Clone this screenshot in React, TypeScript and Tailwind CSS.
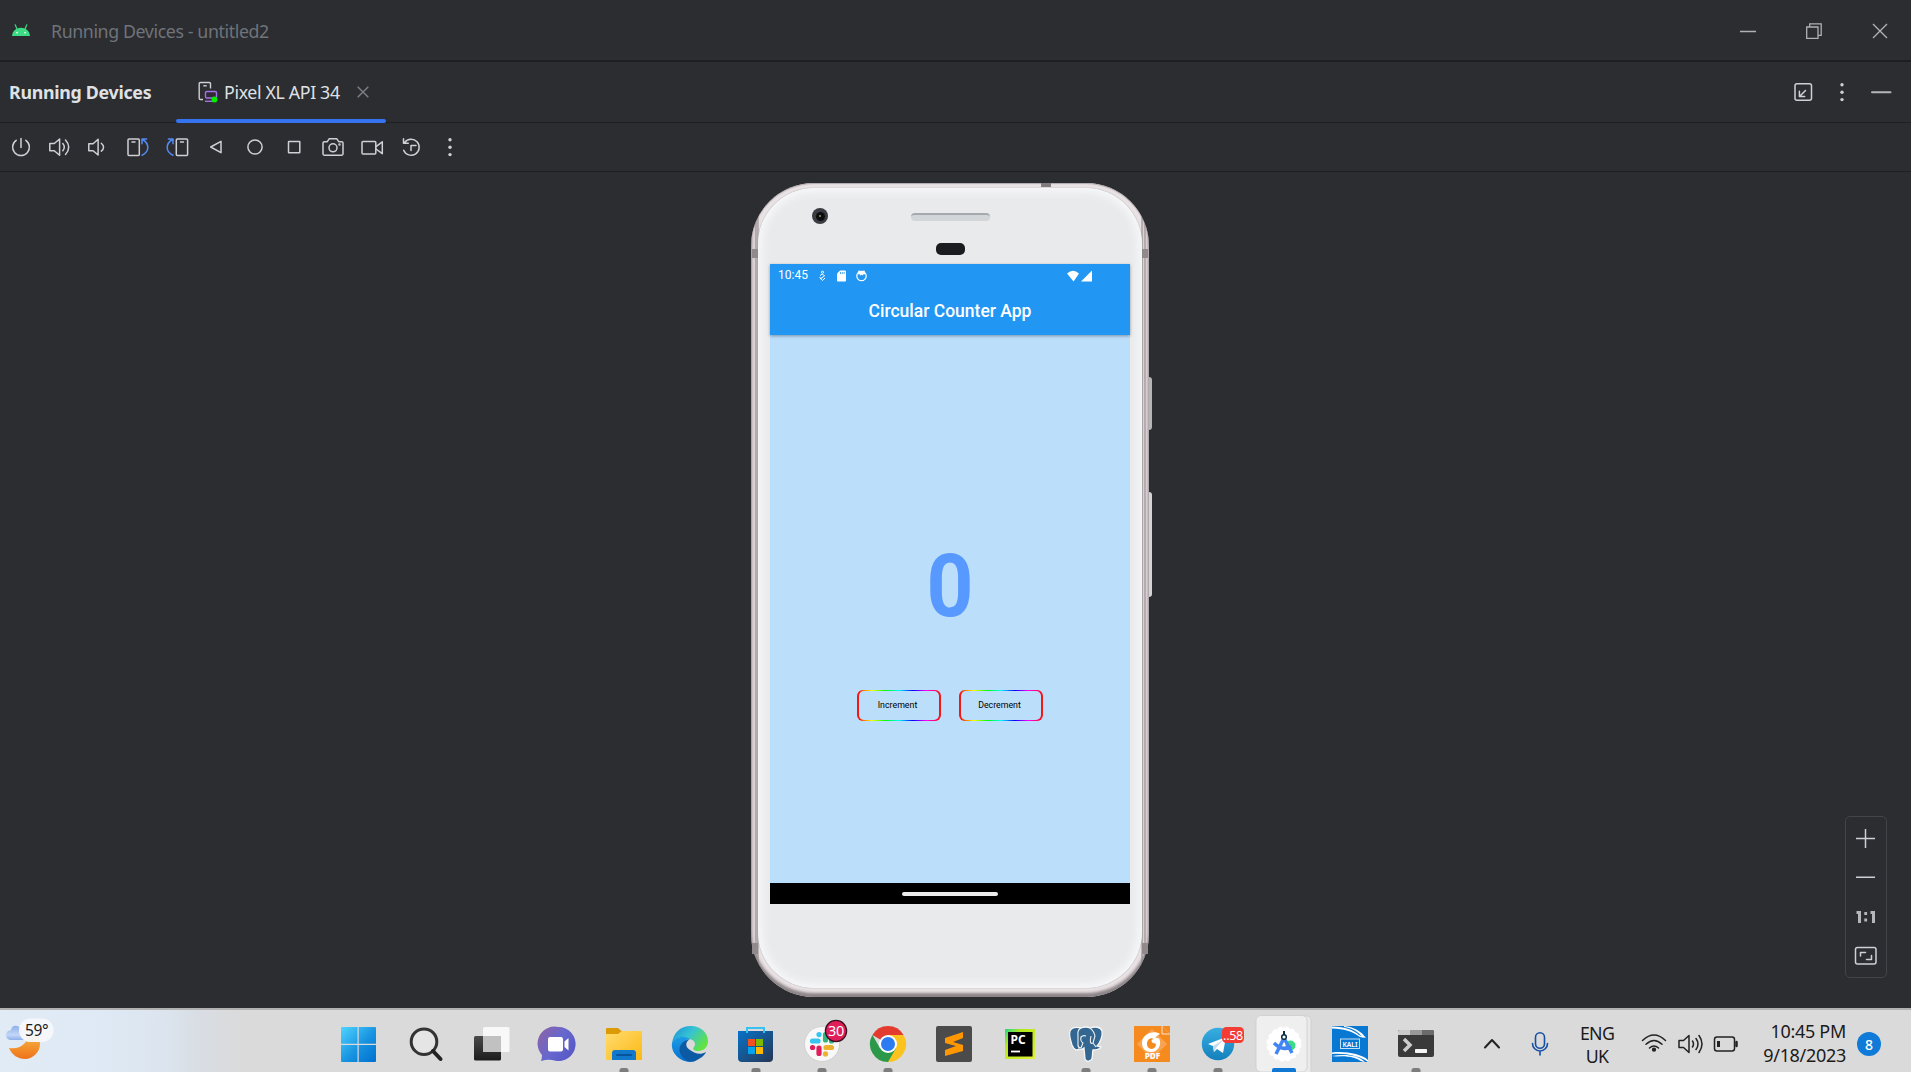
import React from "react";

const stroke = {
  fill: "none",
  stroke: "#ced0d6",
  strokeWidth: 1.5,
  strokeLinejoin: "round" as const,
  strokeLinecap: "round" as const,
};

/* 39px toolbar cell whose drawing is centred on 0,0 */
function Tool({ children }: { children: React.ReactNode }) {
  return (
    <svg className="block h-10 w-[39px] shrink-0" viewBox="-19 -20 39 40" {...stroke}>
      {children}
    </svg>
  );
}

function Dots() {
  return (
    <g fill="#ced0d6" stroke="none">
      <circle cx="0" cy="-7.3" r="1.7" />
      <circle cx="0" cy="0.2" r="1.7" />
      <circle cx="0" cy="7.6" r="1.7" />
    </g>
  );
}

function TitleBar() {
  return (
    <header className="flex h-[62px] shrink-0 items-center border-b-2 border-[#1e1f22] pl-3">
      <svg className="h-5 w-[18px]" viewBox="0 0 18 20">
        <path d="M0 16C.3 11.500 3.500 7.700 9 7.700S17.700 11.500 18 16z" fill="#3ddc84" />
        <path d="M5 9 3.200 4.800M13 9l1.800-4.200" stroke="#3ddc84" strokeWidth="1.200" strokeLinecap="round" />
        <circle cx="5" cy="12.600" r=".9" fill="#e8fff1" />
        <circle cx="13" cy="12.600" r=".9" fill="#e8fff1" />
      </svg>
      <span className="ml-[21px] whitespace-nowrap pt-[2px] text-[17.800px] tracking-[-0.400px] text-[#6f737a]">Running Devices - untitled2</span>
      <div className="ml-auto flex items-center gap-[50px] pr-[23px] pt-px">
        <svg className="h-4 w-4" viewBox="0 0 16 16"><path d="M0 8.500h16" stroke="#b0b1b3" strokeWidth="1.500" /></svg>
        <svg className="h-4 w-4" viewBox="0 0 16 16" fill="none" stroke="#b0b1b3" strokeWidth="1.300">
          <path d="M.7 4h11.300v11.300H.7zM3.700 4V.8h11.500v11.500H12" />
        </svg>
        <svg className="h-4 w-4" viewBox="0 0 16 16" stroke="#b0b1b3" strokeWidth="1.400"><path d="m1 1 14 14M15 1 1 15" /></svg>
      </div>
    </header>
  );
}

function TabBar() {
  return (
    <div className="flex h-[61px] shrink-0 border-b border-[#1e1f22] pl-[9px]">
      <div className="flex h-[60px] w-[167px] items-center whitespace-nowrap text-[17.800px] font-bold tracking-[-0.280px] text-[#dfe1e5]">Running Devices</div>
      <div className="relative flex h-[61px] w-[210px] items-center pb-px pl-[22px]">
        <svg className="h-[22px] w-5 shrink-0" viewBox="0 0 20 22" fill="none" strokeWidth="1.400">
          <path d="M12.500 7.500V2.800q0-1.300-1.300-1.300H2.500q-1.300 0-1.300 1.300v14.400q0 1.300 1.300 1.300H5" stroke="#ced0d6" />
          <path d="M5.300 4.800h3.400" stroke="#ced0d6" />
          <rect x="7.500" y="10.500" width="11" height="6.500" rx="1.200" stroke="#a571e6" fill="#2f2936" />
          <path d="M7 20.300h8" stroke="#a571e6" />
          <circle cx="16.500" cy="18.500" r="2.900" fill="#00f000" />
        </svg>
        <span className="ml-[6px] w-[117px] whitespace-nowrap text-[17.800px] tracking-[-0.360px] text-[#dfe1e5]">Pixel XL API 34</span>
        <svg className="ml-[16px] h-3 w-3" viewBox="0 0 12 12" stroke="#7d8087" strokeWidth="1.400"><path d="m.7.7 10.600 10.600M11.300.7.7 11.300" /></svg>
        <div className="absolute bottom-0 left-0 h-1 w-full rounded-full bg-[#3574f0]" />
      </div>
      <div className="ml-auto flex h-[60px] items-center pr-[10px]">
        <Tool>
          <rect x="-8" y="-8.300" width="16.500" height="16.500" rx="2" />
          <path d="m2.500-1.500-5.700 5.700M-3.600-.8v5.300h5.300" />
        </Tool>
        <Tool><Dots /></Tool>
        <Tool><path d="M-9 .3h18.500" strokeWidth="2" stroke="#b4b6ba" /></Tool>
      </div>
    </div>
  );
}

function Toolbar() {
  return (
    <div className="flex h-[49px] shrink-0 items-center border-b border-[#1e1f22] pl-[2px]">
      <Tool><path d="M0-8.500V.5M-4.800-6.700a8.400 8.400 0 1 0 9.600 0" /></Tool>
      <Tool>
        <path d="M-10.200-3.500h4.500L-.4-8V8.300l-5.300-4.600h-4.500zM2.800-3.500q3 3.500 0 7.200M5.500-7q6.500 7 0 14.500" />
      </Tool>
      <Tool><path d="M-10.200-3.300h4.300l5-4.400V8l-5-4.300h-4.300zM2.300-3.700q4.500 3.800 0 7.800" /></Tool>
      <Tool>
        <rect x="-10" y="-8" width="11.300" height="16.500" rx="1" />
        <path d="M-6-5h3" />
        <path d="M4 8.200Q9.800 5.500 9.800.5T4.500-7.500M4-3.300v-4.600h4.600" stroke="#548af7" />
      </Tool>
      <Tool>
        <rect x="-.7" y="-8" width="11.300" height="16.500" rx="1" />
        <path d="M3.500-5h3" />
        <path d="M-4 8.200Q-9.800 5.500-9.800.5t5.300-8M-4-3.300v-4.600h-4.600" stroke="#548af7" />
      </Tool>
      <Tool><path d="M-5.300 0 5-5.700V5.700z" /></Tool>
      <Tool><circle cx="0" cy="0" r="7.100" /></Tool>
      <Tool><rect x="-5.500" y="-5.500" width="11.300" height="11.300" rx=".5" /></Tool>
      <Tool>
        <path d="M-10-4q0-1.300 1.300-1.300h3l2-3H3.700l2 3h3Q10-5.300 10-4V6.800Q10 8.200 8.700 8.200H-8.700Q-10 8.200-10 6.800z" />
        <circle cx="0" cy=".8" r="4" />
        <circle cx="6.500" cy="-2.500" r=".5" />
      </Tool>
      <Tool>
        <rect x="-10" y="-5.500" width="13.800" height="12.500" rx="1" />
        <path d="M4-.3 10.300-5.200V6.700L4 2" />
      </Tool>
      <Tool>
        <path d="M-7.300 3.200a8 8 0 1 0 1-7.700M-7.500-8.300v4.600h4.800M0-1.500h5M0-1.500v5" />
      </Tool>
      <Tool><Dots /></Tool>
    </div>
  );
}

function RainbowButton({ children }: { children: React.ReactNode }) {
  return (
    <div className="h-[31px] w-[84px] rounded-[6px] border-x-2 border-[#f51616] bg-[linear-gradient(90deg,#ff2000,#ffff00_16%,#00ff00_33%,#00ffff_50%,#0000ff_67%,#ff00ff_84%,#ff0030)] py-px">
      <div className="flex h-full items-center justify-center rounded-[5px] bg-[#bbdefb] pr-[3px] font-['Roboto',sans-serif] text-[8.800px] text-black">{children}</div>
    </div>
  );
}

function Phone() {
  return (
    <div className="relative h-[814px] w-[398px] rounded-[63px] bg-[linear-gradient(90deg,#b5adb0,#ded5d8_2px,#d8cfd2_4px,#8d8588_5px,#d9d1d4_6px,#8d8588_7px,#e9e2e4_8px,#e9e2e4_390px,#8d8588_391px,#d9d1d4_392px,#d9d1d4_393px,#8d8588_394px,#ded5d8_395px,#c5bcc0)] px-[7px] pb-[9px] pt-[5px] shadow-[inset_0_-4px_3px_#8b8386,inset_0_1px_1px_#b0a8ab]">
      <div className="absolute left-full top-[194px] h-[53px] w-[3px] rounded-r-sm bg-[#b5b5b5]" />
      <div className="absolute left-full top-[309px] h-[105px] w-[3px] rounded-r-sm bg-[#d5d3d4]" />
      <div className="absolute left-[290px] top-0 h-1 w-[10px] bg-[#817b7e]" />
      <div className="absolute left-[1px] top-[66px] h-[9px] w-[6px] bg-[#918a8d]" />
      <div className="absolute right-[1px] top-[66px] h-[9px] w-[6px] bg-[#918a8d]" />
      <div className="absolute bottom-[43px] left-[1px] h-[11px] w-[6px] bg-[#918a8d]" />
      <div className="absolute bottom-[43px] right-[1px] h-[11px] w-[6px] bg-[#918a8d]" />
      <div className="relative flex h-[800px] flex-col items-center rounded-[56px] bg-[#e9eaec] shadow-[inset_0_0_9px_4px_#f7f8fa,0_0_1px_#777]">
        <div className="absolute left-[54px] top-[20px] flex h-4 w-4 items-center justify-center rounded-full bg-[#3b3d42]">
          <div className="flex h-[9px] w-[9px] items-center justify-center rounded-full bg-[#0c0d10]"><div className="h-[2px] w-[2px] bg-[#77743f]" /></div>
        </div>
        <div className="mt-[25px] h-2 w-[79px] rounded border-t-2 border-[#a5a9ae] bg-[#d3d6d9]" />
        <div className="mt-[22px] h-3 w-[29px] rounded-[5px] bg-[#1b1c20]" />
        <div className="mt-[9px] flex h-[640px] w-[360px] flex-col bg-[#bbdefb] font-['Roboto',sans-serif]">
          <div className="z-10 h-[71px] shrink-0 bg-[#2196f3] text-white shadow-[0_1px_3px_rgba(0,0,0,0.35)]">
            <div className="flex h-[23px] items-center pl-2">
              <span className="w-[31px] text-[12px] leading-[23px] tracking-[0.050px]">10:45</span>
              <svg className="ml-[9px] h-3 w-2" viewBox="0 0 8 12" fill="none" stroke="#fff" strokeWidth="1"><circle cx="4.500" cy="2.200" r="1.100" /><path d="M2 5.500 4.500 4l2 2L2 9M1.500 7l3 3.500L7 8" /></svg>
              <svg className="ml-[11px] h-3 w-[9px]" viewBox="0 0 9 12" fill="#fff"><path d="M3 .5h5q1 0 1 1v9q0 1-1 1H1q-1 0-1-1v-7z" /><path d="M3.500 2v2M5.300 2v2M7.100 2v2" stroke="#2196f3" strokeWidth=".8" /></svg>
              <svg className="ml-[10px] h-3 w-[11px]" viewBox="0 0 11 12" fill="none" stroke="#fff"><circle cx="5.500" cy="6" r="4.700" strokeWidth="1.200" /><path d="M2 2 2.500.5 5.500 1l3-.5L9 2v2.500L7.500 4 7 5.500 5.500 4.800 4 5.500 3.500 4 2 4.500z" fill="#fff" stroke="none" /></svg>
              <svg className="ml-auto mr-[37px] h-3 w-[26px]" viewBox="0 0 26 12" fill="#fff"><path d="M0 3.500Q6-1.800 12 3.500L6.500 11.500z" /><path d="M25 .5v11H14z" /></svg>
            </div>
            <h1 className="pt-[12px] text-center text-[17.500px] font-medium leading-[24px]">Circular Counter App</h1>
          </div>
          <div className="flex flex-1 flex-col items-center">
            <div className="mt-[198px] h-[106px] text-[87px] font-bold leading-[106px] tracking-[0] text-[#5899ff]"><span className="inline-block scale-x-[0.940]">0</span></div>
            <div className="mt-[51px] flex gap-[18px]">
              <RainbowButton>Increment</RainbowButton>
              <RainbowButton>Decrement</RainbowButton>
            </div>
          </div>
          <div className="flex h-[21px] items-center justify-center bg-black">
            <div className="h-1 w-24 rounded-full bg-[#ebebeb]" />
          </div>
        </div>
      </div>
    </div>
  );
}

function ZoomPanel() {
  return (
    <div className="absolute bottom-[30px] right-6 flex h-[162px] w-[42px] flex-col items-center rounded-[5px] border border-[#43454a]">
      <svg className="block h-[160px] w-10" viewBox="0 0 40 160" {...stroke}>
        <path d="M10 21.500h19M19.500 12v19M10 60.300h19" strokeLinecap="butt" />
        <path d="M10.500 95.500h3v10.500M24.500 95.500h3v10.500" stroke="#b4b6ba" strokeWidth="3" strokeLinejoin="miter" strokeLinecap="butt" />
        <path d="M18.300 96.500h2.800M18.300 103h2.800" stroke="#b4b6ba" strokeWidth="3" strokeLinecap="butt" />
        <rect x="9.500" y="130.500" width="20.500" height="16.500" rx="2" />
        <path d="M14.500 139V135.500h5M25.500 138.500v4h-5" />
      </svg>
    </div>
  );
}

/* 66px taskbar cell whose drawing is centred on 0,0 */
function App66({ children, running, active }: { children: React.ReactNode; running?: boolean; active?: boolean }) {
  return (
    <svg className="block h-[62px] w-[66px] shrink-0" viewBox="-33 -34 66 62">
      {active && (
        <>
          <path d="M0-28h22q5 0 5 5v50q0 5-5 5H0z" fill="#e9e9e9" stroke="#cbcbcb" strokeWidth=".7" />
          <rect x="-28" y="-28.500" width="51" height="56.500" rx="5" fill="#efefef" stroke="#cdcdcd" strokeWidth=".8" />
        </>
      )}
      {children}
      {active ? <rect x="-12" y="24" width="24" height="6" rx="2" fill="#0f78d4" /> : running && <rect x="-4.500" y="24" width="9" height="6" rx="2.500" fill="#7d7d7d" />}
    </svg>
  );
}

function TaskApps() {
  return (
    <div className="flex">
      <App66>
        <defs>
          <linearGradient id="win" x1="-19" y1="-17" x2="16" y2="18" gradientUnits="userSpaceOnUse"><stop stopColor="#4fd4ff" /><stop offset=".55" stopColor="#1793e0" /><stop offset="1" stopColor="#0070d0" /></linearGradient>
        </defs>
        <path d="M-19-16q0-1 1-1h15.500V-.3H-19zM-1.300-17H15q1 0 1 1V-.3H-1.300zM-19 1h16.500v17H-18q-1 0-1-1zM-1.300 1H16v16q0 1-1 1H-1.300z" fill="url(#win)" />
      </App66>
      <App66>
        <circle cx="-2" cy="-2.300" r="12.800" fill="#e5e5e5" stroke="#333" strokeWidth="3" />
        <path d="m7 7 7.500 8" stroke="#222" strokeWidth="4" strokeLinecap="round" />
      </App66>
      <App66>
        <defs><linearGradient id="tv" x1="0" y1="0" x2="0" y2="1"><stop stopColor="#4a4a4a" /><stop offset="1" stopColor="#1c1c1c" /></linearGradient></defs>
        <rect x="-18" y="-8" width="27" height="24.500" rx="1.500" fill="url(#tv)" />
        <rect x="-9" y="-17" width="26.500" height="25" rx="1.500" fill="#f8f8f8" />
        <path d="M-9-8H9V8H-8q-1 0-1-1z" fill="#c1c1c1" />
      </App66>
      <App66>
        <defs><linearGradient id="chat" x1="0" y1=".2" x2="1" y2=".8"><stop stopColor="#8a63a8" /><stop offset=".5" stopColor="#6668cf" /><stop offset="1" stopColor="#5657c4" /></linearGradient></defs>
        <g transform="translate(1)">
          <path d="M-.5-17a17 17 0 1 1-4 33.500q-6-1.500-13.500.5 1-3 1-6A17 17 0 0 1-.5-17z" fill="url(#chat)" />
          <rect x="-11" y="-7" width="15" height="14.500" rx="2" fill="#fff" />
          <path d="M5.500-2.500 9.500-6V6.500L5.500 3z" fill="#fff" />
        </g>
      </App66>
      <App66 running>
        <defs><linearGradient id="fold" x1="0" y1="0" x2="1" y2="1"><stop stopColor="#ffdc70" /><stop offset="1" stopColor="#fdb813" /></linearGradient></defs>
        <path d="M-18-15q0-1 1-1h11l4.500 4v4H-18z" fill="#dc9a05" />
        <path d="M-18-10H-6l4-3H17q1 0 1 1v28H-17q-1 0-1-1z" fill="url(#fold)" />
        <path d="M-12 16V9q0-3 3-3H9q3 0 3 3v7z" fill="#1179cb" />
        <path d="M-7 11H7" stroke="#07529b" strokeWidth="2" strokeLinecap="round" />
      </App66>
      <App66>
        <defs>
          <linearGradient id="ed1" x1="0" y1="0" x2="1" y2=".6"><stop stopColor="#168ed5" /><stop offset=".5" stopColor="#36c3d4" /><stop offset="1" stopColor="#62e340" /></linearGradient>
          <linearGradient id="ed2" x1="0" y1="0" x2="0" y2="1"><stop stopColor="#1c9ce6" /><stop offset="1" stopColor="#0870cf" /></linearGradient>
        </defs>
        <path d="M-18 0C-17-11-10-18 1-18 11-18 18-11 18-3 18 3 14 7 8 7 4 7 2 5 4 3 7-1 3-5-1-5-8-9-14-7-18 0z" fill="url(#ed1)" />
        <path d="M-18-1C-14-8-6-9 0-5-6-4-9 1-7 7-4 15 3 17 7 16 2 19-4 18-8 16-15 12-19 6-18-1z" fill="url(#ed2)" />
        <path d="M0-5C-9-3-13 4-9 11-5 18 2 19 7 16 11 14 15 11 16 8 11 11 5 10 0 6-5 3-5-2 0-5z" fill="#0c59a4" />
      </App66>
      <App66 running>
        <defs><linearGradient id="store" x1="0" y1="0" x2="1" y2="1"><stop stopColor="#0873c9" /><stop offset="1" stopColor="#263653" /></linearGradient></defs>
        <path d="M-18-13h35v27q0 4-4 4h-27q-4 0-4-4z" fill="url(#store)" />
        <path d="M-9-11v-5h17v5" fill="none" stroke="#35c1f1" strokeWidth="2" />
        <path d="M-8-5h7v7h-7z" fill="#f25022" /><path d="M0-5h7v7H0z" fill="#7fba00" /><path d="M-8 3h7v7h-7z" fill="#00a4ef" /><path d="M0 3h7v7H0z" fill="#ffb900" />
      </App66>
      <App66 running>
        <circle cx="0" cy="0" r="17.500" fill="#f8f8f8" stroke="#ccc" strokeWidth=".8" />
        <g strokeWidth="5.200" strokeLinecap="round">
          <path d="M-9.500-3h5.500" stroke="#36c5f0" /><path d="M-3-9.500v.1" stroke="#36c5f0" />
          <path d="M3.500-9.500v5.500" stroke="#2eb67d" /><path d="M9.500-3h.1" stroke="#2eb67d" />
          <path d="M-3 4v5.500" stroke="#e01e5a" /><path d="M-9.500 3.500h.1" stroke="#e01e5a" />
          <path d="M4 3.500h5.500" stroke="#ecb22e" /><path d="M3.500 9.800v.1" stroke="#ecb22e" />
        </g>
        <circle cx="14" cy="-13" r="10.600" fill="#e01e5a" stroke="#3b1020" strokeWidth="1.300" />
        <text x="14" y="-8" textAnchor="middle" fill="#fff" fontSize="14.500" letterSpacing="-.3">30</text>
      </App66>
      <App66 running>
        <path d="M0 0-15.600-9A18 18 0 0 1 15.600-9z" fill="#e33b2e" />
        <path d="M0 0V-9H15.600A18 18 0 0 1 0 18z" fill="#fcc31e" />
        <path d="M0 0 7.800 4.500 0 18A18 18 0 0 1-15.600-9L-7.800 4.500z" fill="#2c9849" />
        <circle r="9" fill="#fff" /><circle r="7" fill="#2c7bf0" />
      </App66>
      <App66>
        <rect x="-18" y="-18" width="36" height="36" rx="2" fill="#4b4b4b" />
        <path d="M-9-6 9-12v6L-1-2 9 1v6L-9 12V6L2 2-9-1z" fill="#ff9800" />
      </App66>
      <App66>
        <defs><linearGradient id="pc" x1="0" y1="0" x2="1" y2="1"><stop stopColor="#21d789" /><stop offset=".3" stopColor="#b5e91c" /><stop offset="1" stopColor="#dff03a" /></linearGradient></defs>
        <rect x="-15" y="-15" width="30" height="30" fill="url(#pc)" />
        <rect x="-12" y="-12" width="24.500" height="24.500" fill="#000" />
        <text x="-9.500" y="0" fill="#fff" fontSize="12" fontWeight="700">PC</text>
        <path d="M-9 7.500h9" stroke="#fff" strokeWidth="1.800" />
      </App66>
      <App66 running>
        <path d="M-5-16q5-2 9 0c5-2 11-1 12 3 1 5-2 12-5 15l4 1q-2 3-8 3c-1 4 0 9-2 10q-4 3-6-1L-2 4q-2 2-5 1c-2 2-5 1-7-4-2-6-3-11-2-14 2-4 7-4 11-3z" fill="#336791" stroke="#f7f7f7" strokeWidth="1.300" />
        <path d="M-5-16q-4 2-3 8v9q0 3 3 3l2-5q-3-2-2-6 2-2 5-1M4-16q4 3 5 8l-2 7 3 4M7-1Q3 1 5-8" fill="none" stroke="#f2f2f2" strokeWidth="1.100" />
      </App66>
      <App66 running>
        <path d="M-18-18H10l8 8v28h-36z" fill="#f58a1f" />
        <path d="m0-15 15 15L0 15-15 0z" fill="#f9a350" />
        <path d="M10-18h8v8z" fill="#f58a1f" />
        <path d="M10-18v8h8" fill="none" stroke="#f8e3cd" strokeWidth="1" />
        <path d="M8-10C3-14-10-11-10-1-10 5-6 8-1 8 5 8 9 3 8-3 8-6 5-7 3-6q1-2 5-4z" fill="#fff" />
        <path d="M-5 0C-5-5-1-7 2-5-1-5-1-2 1-1q3 0 3 2-1 4-5 4-4-1-4-5z" fill="#f58a1f" />
        <text x="0.500" y="14.800" textAnchor="middle" fill="#fff" fontSize="8.200" fontWeight="800">PDF</text>
      </App66>
      <App66 running>
        <defs><linearGradient id="tg" x1="0" y1="0" x2="0" y2="1"><stop stopColor="#37aee2" /><stop offset="1" stopColor="#1480bb" /></linearGradient></defs>
        <circle r="16.200" fill="url(#tg)" />
        <path d="M-10 0 8-7 5 9l-6-4-3 3-1-6z" fill="#fff" /><path d="M-5 2 5-4-2 4l-2 4z" fill="#c3dceb" />
        <rect x="4" y="-17" width="22" height="16" rx="4.500" fill="#f23c34" />
        <text x="15" y="-4" textAnchor="middle" fill="#fff" fontSize="12.500" letterSpacing="-.3">..58</text>
      </App66>
      <App66 active>
        <circle r="16.500" fill="#fff" stroke="#fff" strokeWidth="2" strokeDasharray="4 2.500" />
        <circle cx="6.500" cy="1.500" r="5" fill="#3ddc84" />
        <path d="m0-6-8 16M0-6l8 15M-10-1Q-1 8 7 2" fill="none" stroke="#4285f4" strokeWidth="3.500" />
        <path d="M0-13v4" stroke="#073042" strokeWidth="2" /><circle cy="-7" r="2.300" fill="#fff" stroke="#073042" strokeWidth="1.500" />
      </App66>
      <App66>
        <path d="M-18-18h36v36h-36z" fill="#0878d3" />
        <path d="M-18-17.500C-5-17 4-14 9-9l6 3-5-1C2-13-6-15-18-15.500z" fill="#fff" />
        <path d="M-6-18C4-17 11-13 16-6l-4-1C9-12 2-16-6-17z" fill="#fff" />
        <path d="M-18 8.500C-4 7 11 10 18 16v2C10 12-4 9-18 10zM-18 12C-5 10 8 11 15 18" fill="#fff" />
        <path d="M-18 13C-5 11 6 13 12 18h-30z" fill="#0878d3" />
        <rect x="-9.500" y="-5" width="19" height="9.500" fill="none" stroke="#d9e9f6" strokeWidth=".9" />
        <text x="0" y="2.500" textAnchor="middle" fill="#fff" fontSize="6.800" fontWeight="600">KALI</text>
      </App66>
      <App66 running>
        <path d="M-18-12q0-2 2-2h32q2 0 2 2v23q0 2-2 2h-32q-2 0-2-2z" fill="#3a3a3a" />
        <path d="M-18-9v-3q0-2 2-2H-6v5z" fill="#ccc" /><path d="M-6-14H6v5H-6z" fill="#999" /><path d="M6-14h10q2 0 2 2v3H6z" fill="#6b6b6b" />
        <path d="m-12-5 6 6-6 6" fill="none" stroke="#ccc" strokeWidth="3.500" /><rect x="-1" y="5" width="12" height="4" rx=".7" fill="#f5f5f5" />
      </App66>
    </div>
  );
}

function Taskbar() {
  const ink = { fill: "none", stroke: "#222", strokeWidth: 1.5, strokeLinecap: "round" as const, strokeLinejoin: "round" as const };
  return (
    <footer className="flex h-16 shrink-0 border-t-2 border-[#b1b1b1] bg-[linear-gradient(90deg,#e0ebf5,#dfeaf6_90px,#dce5ef_160px,#d9dde3_200px,#dadada_245px)] text-[#1b1b1b]">
      <div className="w-[327px]">
        <svg className="block h-[62px] w-[60px]" viewBox="0 0 60 62">
          <defs>
            <linearGradient id="moon" x1="0" y1="0" x2="0" y2="1"><stop stopColor="#f8c84d" /><stop offset="1" stopColor="#ef7118" /></linearGradient>
            <linearGradient id="cloud" x1="0" y1="0" x2="0" y2="1"><stop stopColor="#8eafe9" /><stop offset=".65" stopColor="#c4d7f7" /><stop offset="1" stopColor="#8baee9" /></linearGradient>
          </defs>
          <path d="M29 19c1 13-8 21-20 19C12 45 18 49 25 49c8 0 15-7 15-15 0-7-4-13-11-15z" fill="url(#moon)" />
          <path d="M10 30q-4-1-4-5t5-5q1-5 6-4 6 1 7 9v5z" fill="url(#cloud)" />
          <rect x="19" y="8.500" width="34.500" height="23.500" rx="11.500" fill="#f5f8fb" fillOpacity=".95" />
          <text x="25" y="26" fontSize="15.500" letterSpacing="-.4" fill="#1b1b1b">59°</text>
        </svg>
      </div>
      <TaskApps />
      <div className="flex h-[62px] flex-1 items-start">
        <svg className="ml-[34px] mt-[25px] h-4 w-[18px]" viewBox="0 0 18 16" {...ink} strokeWidth="2"><path d="m2 12.500 7-7.500 7 7.500" /></svg>
        <svg className="ml-[30px] mt-[21px] h-[26px] w-[18px]" viewBox="0 0 18 26" fill="none" stroke="#1450a3" strokeWidth="1.600" strokeLinecap="round"><rect x="4.500" y="1.700" width="9" height="15.500" rx="4.500" /><path d="M1.500 12.500a7.500 7.500 0 0 0 15 0M9 20v4" /></svg>
        <div className="ml-[27px] mt-[12px] w-[42px] text-center text-[17.800px] leading-[22.500px] tracking-[-0.700px]">ENG<br />UK</div>
        <svg className="ml-[23px] mt-[23px] h-5 w-[26px]" viewBox="0 0 26 20" {...ink}><path d="M1.500 7.500q11.500-11 23 0M5 11.200q8-7.500 16 0M8.500 15q4.500-4 9 0" /><circle cx="13" cy="16.700" r="1.400" fill="#222" /></svg>
        <svg className="ml-[10px] mt-[22px] h-6 w-[27px]" viewBox="0 0 27 24" {...ink}><path d="M2 8.500h4.500L12 3.500v17L6.500 15.500H2zM15.500 9q2 3 0 6M19 6.500q4 5.500 0 11M22 3.500q6 8.500 0 17" /></svg>
        <svg className="ml-[9px] mt-[25px] h-[18px] w-[26px]" viewBox="0 0 26 18" {...ink}><rect x="1.500" y="2" width="20" height="14" rx="2.500" /><path d="M5.500 6v6" strokeWidth="3" strokeLinecap="butt" /><path d="M23.500 7v4" strokeWidth="2.500" /></svg>
        <div className="ml-auto mr-[11px] mt-[9px] whitespace-nowrap text-right text-[18px] leading-[24px] tracking-[-0.300px]">10:45 PM<br />9/18/2023</div>
        <div className="mr-[30px] mt-[22px] flex h-6 w-6 items-center justify-center rounded-full bg-[#0f7ad8] text-[14px] font-medium text-white">8</div>
      </div>
    </footer>
  );
}

export default function App() {
  return (
    <div className="flex h-[1072px] w-[1911px] flex-col overflow-hidden bg-[#2b2d30] font-['Noto_Sans','Open_Sans',sans-serif]">
      <TitleBar />
      <TabBar />
      <Toolbar />
      <main className="relative flex min-h-0 flex-1 justify-center pr-[11px] pt-[11px]">
        <Phone />
        <ZoomPanel />
      </main>
      <Taskbar />
    </div>
  );
}
